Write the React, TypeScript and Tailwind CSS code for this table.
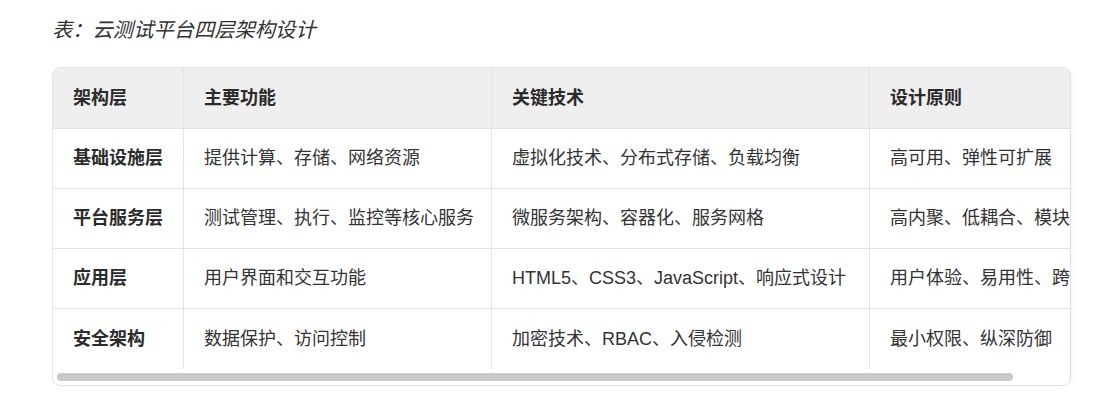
import React from 'react'

type Row = {
  layer: string
  feature: string
  tech: string
  principle: string
}

const ROWS: Row[] = [
  { layer: '基础设施层', feature: '提供计算、存储、网络资源', tech: '虚拟化技术、分布式存储、负载均衡', principle: '高可用、弹性可扩展' },
  { layer: '平台服务层', feature: '测试管理、执行、监控等核心服务', tech: '微服务架构、容器化、服务网格', principle: '高内聚、低耦合、模块化设计' },
  { layer: '应用层', feature: '用户界面和交互功能', tech: 'HTML5、CSS3、JavaScript、响应式设计', principle: '用户体验、易用性、跨平台兼容' },
  { layer: '安全架构', feature: '数据保护、访问控制', tech: '加密技术、RBAC、入侵检测', principle: '最小权限、纵深防御' },
]

const GRID = 'grid grid-cols-[131px_308px_378px_255px] w-[1072px]'
const CELL = 'flex items-center px-5 whitespace-nowrap overflow-hidden'

export default function App() {
  return (
    <div className="w-[1098px] h-[399px] bg-white pt-[18px] pl-[52px] font-['Liberation_Sans','Noto_Sans_CJK_SC',sans-serif] text-[#333]">
      {/* Caption */}
      <p className="italic text-[20.3px] leading-[24px] text-[#333]">表：云测试平台四层架构设计</p>

      {/* Table card */}
      <div className="mt-[25px] w-[1019px] border border-[#e3e3e3] rounded-[8px] overflow-hidden shadow-[5px_0_8px_-4px_rgba(0,0,0,0.05)]">
        <div className={`${GRID} h-[61px] bg-[#efefef] border-b border-[#e3e3e3] text-[18px] font-bold text-[#2b2b2b]`}>
          <div className={`${CELL} border-r border-[#e3e3e3]`}>架构层</div>
          <div className={`${CELL} border-r border-[#e3e3e3]`}>主要功能</div>
          <div className={`${CELL} border-r border-[#e3e3e3]`}>关键技术</div>
          <div className={CELL}>设计原则</div>
        </div>

        {ROWS.map((row, i) => (
          <div
            key={row.layer}
            className={`${GRID} h-[60px] text-[18px] ${i < ROWS.length - 1 ? 'border-b border-[#e3e3e3]' : ''}`}
          >
            <div className={`${CELL} border-r border-[#e3e3e3] font-bold text-[#2b2b2b]`}>{row.layer}</div>
            <div className={`${CELL} border-r border-[#e3e3e3]`}>{row.feature}</div>
            <div className={`${CELL} border-r border-[#e3e3e3]`}>{row.tech}</div>
            <div className={CELL}>{row.principle}</div>
          </div>
        ))}

        {/* Horizontal scrollbar */}
        <div className="h-[16px] p-[4px]">
          <div className="w-[956px] h-[8px] rounded-full bg-[#c9c9c9]" />
        </div>
      </div>
    </div>
  )
}
